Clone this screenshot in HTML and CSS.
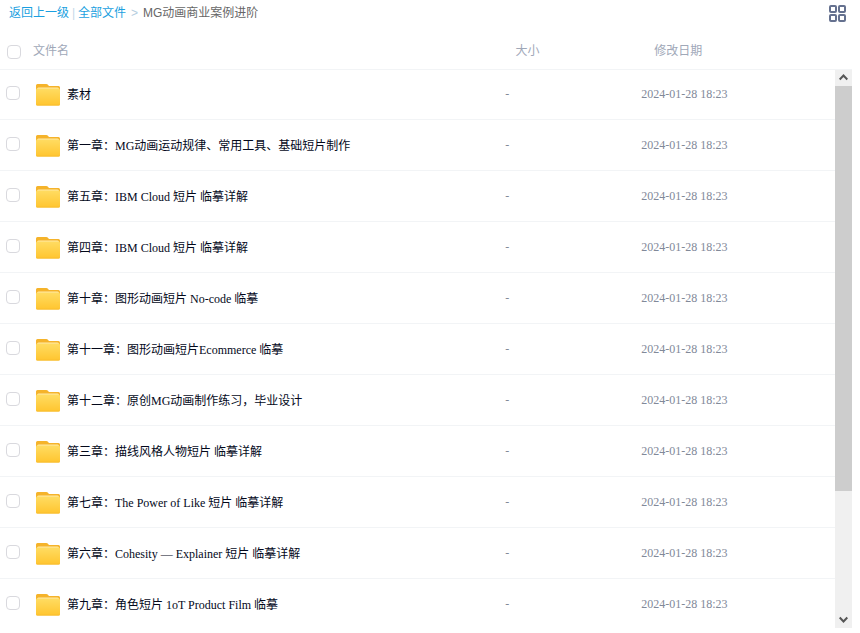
FILE: index.html
```html
<!DOCTYPE html>
<html lang="zh-CN">
<head>
  <meta charset="UTF-8" />
  <meta name="viewport" content="width=device-width, initial-scale=1.0" />
  <title>MG动画商业案例进阶</title>
  <link rel="stylesheet" href="styles.css">
</head>
<body>
  <!-- shared folder icon -->
  <svg class="sprite" aria-hidden="true">
    <defs>
      <linearGradient id="folder-front" x1="0" y1="0" x2="0" y2="1">
        <stop offset="0" stop-color="#ffdc62" />
        <stop offset="1" stop-color="#ffc52f" />
      </linearGradient>
      <symbol id="folder" viewBox="0 0 24 22">
        <path fill="#f5b32a" d="M1.500 0h8.800q.8 0 1.400.6l.8.800q.5.500 1.200.500H22.500a1.500 1.500 0 0 1 1.500 1.500V12H0V1.500A1.500 1.500 0 0 1 1.500 0z" />
        <path fill="#ffe9a8" d="M1 5a1.500 1.500 0 0 1 1.500-1.500h19A1.500 1.500 0 0 1 23 5V8H1z" />
        <path fill="url(#folder-front)" d="M0 5.500q.3-1 1.500-1h21q1.200 0 1.500 1V20a1.500 1.500 0 0 1-1.500 1.500h-21A1.500 1.500 0 0 1 0 20z" />
        <path fill="#f6b92c" d="M0 19.500q.3 1.200 1.500 1.200h21q1.200 0 1.500-1.200v.5a1.500 1.500 0 0 1-1.500 1.500h-21A1.500 1.500 0 0 1 0 20z" />
      </symbol>
    </defs>
  </svg>

  <header class="topbar">
    <nav class="crumbs">
      <a href="#">返回上一级</a>
      <span class="divider">|</span>
      <a href="#">全部文件</a>
      <span class="arrow">&gt;</span>
      <span class="current">MG动画商业案例进阶</span>
    </nav>
    <button class="view-btn" type="button" aria-label="切换视图">
      <svg width="18" height="18" viewBox="0 0 18 18" fill="none" stroke="#65718f" stroke-width="2">
        <rect x="1" y="1" width="6" height="6" rx="1" />
        <rect x="10" y="1" width="6" height="6" rx="1" />
        <rect x="1" y="10" width="6" height="6" rx="1" />
        <rect x="10" y="10" width="6" height="6" rx="1" />
      </svg>
    </button>
  </header>

  <table class="files files-head">
    <thead>
      <tr>
        <th class="col-name">
          <label class="name"><input type="checkbox" aria-label="全选"><span>文件名</span></label>
        </th>
        <th class="col-size">大小</th>
        <th>修改日期</th>
      </tr>
    </thead>
  </table>

  <div class="list">
    <div class="viewport">
      <table class="files files-body">
        <tbody>
          <tr>
            <td class="col-name"><label class="name"><input type="checkbox"><svg class="folder"><use href="#folder" /></svg><span>素材</span></label></td>
            <td class="col-size">-</td>
            <td>2024-01-28 18:23</td>
          </tr>
          <tr>
            <td class="col-name"><label class="name"><input type="checkbox"><svg class="folder"><use href="#folder" /></svg><span>第一章：MG动画运动规律、常用工具、基础短片制作</span></label></td>
            <td class="col-size">-</td>
            <td>2024-01-28 18:23</td>
          </tr>
          <tr>
            <td class="col-name"><label class="name"><input type="checkbox"><svg class="folder"><use href="#folder" /></svg><span>第五章：IBM Cloud 短片 临摹详解</span></label></td>
            <td class="col-size">-</td>
            <td>2024-01-28 18:23</td>
          </tr>
          <tr>
            <td class="col-name"><label class="name"><input type="checkbox"><svg class="folder"><use href="#folder" /></svg><span>第四章：IBM Cloud 短片 临摹详解</span></label></td>
            <td class="col-size">-</td>
            <td>2024-01-28 18:23</td>
          </tr>
          <tr>
            <td class="col-name"><label class="name"><input type="checkbox"><svg class="folder"><use href="#folder" /></svg><span>第十章：图形动画短片 No-code 临摹</span></label></td>
            <td class="col-size">-</td>
            <td>2024-01-28 18:23</td>
          </tr>
          <tr>
            <td class="col-name"><label class="name"><input type="checkbox"><svg class="folder"><use href="#folder" /></svg><span>第十一章：图形动画短片Ecommerce 临摹</span></label></td>
            <td class="col-size">-</td>
            <td>2024-01-28 18:23</td>
          </tr>
          <tr>
            <td class="col-name"><label class="name"><input type="checkbox"><svg class="folder"><use href="#folder" /></svg><span>第十二章：原创MG动画制作练习，毕业设计</span></label></td>
            <td class="col-size">-</td>
            <td>2024-01-28 18:23</td>
          </tr>
          <tr>
            <td class="col-name"><label class="name"><input type="checkbox"><svg class="folder"><use href="#folder" /></svg><span>第三章：描线风格人物短片 临摹详解</span></label></td>
            <td class="col-size">-</td>
            <td>2024-01-28 18:23</td>
          </tr>
          <tr>
            <td class="col-name"><label class="name"><input type="checkbox"><svg class="folder"><use href="#folder" /></svg><span>第七章：The Power of Like 短片 临摹详解</span></label></td>
            <td class="col-size">-</td>
            <td>2024-01-28 18:23</td>
          </tr>
          <tr>
            <td class="col-name"><label class="name"><input type="checkbox"><svg class="folder"><use href="#folder" /></svg><span>第六章：Cohesity — Explainer 短片 临摹详解</span></label></td>
            <td class="col-size">-</td>
            <td>2024-01-28 18:23</td>
          </tr>
          <tr>
            <td class="col-name"><label class="name"><input type="checkbox"><svg class="folder"><use href="#folder" /></svg><span>第九章：角色短片 1oT Product Film 临摹</span></label></td>
            <td class="col-size">-</td>
            <td>2024-01-28 18:23</td>
          </tr>
        </tbody>
      </table>
    </div>

    <div class="scrollbar">
      <button type="button" aria-label="向上滚动">
        <svg width="9" height="8" viewBox="0 0 9 8"><path d="M.700 5.500 4.500 1.500 8.300 5.500" fill="none" stroke="#555" stroke-width="2" /></svg>
      </button>
      <div class="track"><div class="thumb"></div></div>
      <button type="button" aria-label="向下滚动">
        <svg width="9" height="8" viewBox="0 0 9 8"><path d="M.700 1.500 4.500 5.500 8.300 1.500" fill="none" stroke="#555" stroke-width="2" /></svg>
      </button>
    </div>
  </div>
</body>
</html>
```

FILE: styles.css
```css
* {
  box-sizing: border-box;
  margin: 0;
  padding: 0;
}

body {
  display: flex;
  flex-direction: column;
  height: 100vh;
  padding: 0 8px 5px 0;
  background: #fff;
  font-family: "Liberation Sans", "Noto Sans CJK SC", sans-serif;
  font-size: 12px;
  line-height: 18px;
}

button {
  border: none;
  background: none;
  cursor: pointer;
}

.sprite {
  position: absolute;
  width: 0;
  height: 0;
}

/* top bar */
.topbar {
  display: flex;
  flex: none;
  justify-content: space-between;
  align-items: flex-start;
  height: 32px;
  padding: 4px 5px 0 9px;
}

.crumbs {
  display: flex;
  color: #666;
}

.crumbs a {
  color: #1a9fe0;
  text-decoration: none;
}

.divider {
  width: 9px;
  color: #c4d8e8;
  text-align: center;
}

.arrow {
  width: 17px;
  color: #b4cde0;
  text-align: center;
}

.view-btn {
  height: 18px;
  margin-top: 1px;
}

.view-btn svg {
  display: block;
}

/* file table */
.files {
  width: 100%;
  flex: none;
  table-layout: fixed;
  border-collapse: separate;
  border-spacing: 0;
}

.files th,
.files td {
  text-align: left;
  font-weight: normal;
  border-bottom: 1px solid #f2f4f6;
}

.col-name {
  width: 60.5%;
}

.col-size {
  width: 16.3%;
}

.name {
  display: flex;
  align-items: center;
}

.name input {
  appearance: none;
  flex: none;
  width: 14px;
  height: 14px;
  border: 1px solid #d9d9de;
  border-radius: 4px;
  background: #fff;
}

.name input:checked {
  background: #1a9fe0;
}

.files-head th {
  height: 38px;
  color: #a0a8b8;
}

.files-head .name {
  gap: 12px;
  padding-left: 7px;
}

.files-head input {
  margin-top: 2px;
}

.files-body {
  margin-top: -1px;
  font-family: "Liberation Serif", "Noto Sans CJK SC", serif;
}

.files-body td {
  height: 51px;
  color: #818999;
}

.files-body .name {
  padding: 2px 0 0 6px;
  color: #03081a;
}

.files-body input {
  margin-bottom: 4px;
}

.folder {
  flex: none;
  width: 24px;
  height: 22px;
  margin: 0 7px 0 16px;
}

/* scroll area */
.list {
  display: flex;
  flex: 1;
  min-height: 0;
}

.viewport {
  flex: 1;
  overflow: hidden;
}

.scrollbar {
  display: flex;
  flex-direction: column;
  width: 17px;
  background: #f0f0f0;
}

.scrollbar button {
  display: flex;
  justify-content: center;
  align-items: center;
  height: 16px;
}

.track {
  flex: 1;
}

.thumb {
  height: 77%;
  background: #cdcdcd;
}
```
